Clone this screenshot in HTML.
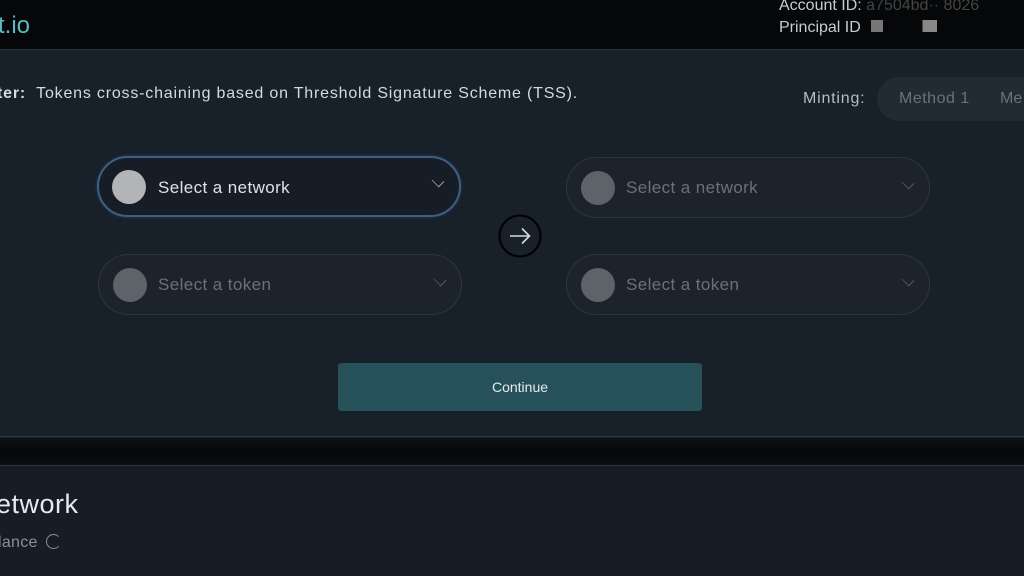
<!DOCTYPE html>
<html><head><style>
*{margin:0;padding:0;box-sizing:border-box}
body{width:1024px;height:576px;overflow:hidden;background:#161d26;font-family:"Liberation Sans",sans-serif;position:relative}
.hdr{position:absolute;left:0;top:0;width:1024px;height:50px;background:#050709;border-bottom:1px solid #1e3a3a}
.logo{position:absolute;left:-2px;top:12px;font-size:24px;color:#5cb8c4}
.acc{position:absolute;left:779px;top:-5px;color:#c8ccd2;font-size:16px;line-height:22px}
.panel{position:absolute;left:0;top:51px;width:1024px;height:386px;background:#18202a;border-bottom:1px solid #2a3a42}
.band{position:absolute;left:0;top:438px;width:1024px;height:28px;background:linear-gradient(#0c1216,#050709 50%,#0a0f13);border-bottom:1px solid #2a3a42}
.t{position:absolute;font-size:16px;color:#d6d9de;white-space:nowrap}
.sel{position:absolute;width:364px;height:61px;border-radius:31px;border:1px solid #2c3640;background:#1c232c}
.sel .c{position:absolute;left:14px;top:13px;width:34px;height:34px;border-radius:50%;background:#5e6269}
.sel .l{position:absolute;left:59px;top:20px;font-size:17px;color:#6c7178;letter-spacing:.4px}
.sel .v{position:absolute;right:16px;top:20px;width:10px;height:10px;border-right:1px solid #555b62;border-bottom:1px solid #555b62;transform:rotate(45deg) scaleY(.8)}
.act{border:2px solid #3e5f80;background:#161d26;box-shadow:0 0 3px #27405a}
.act .c{background:#b3b4b8;left:13px;top:12px}
.act .l{color:#dfe2e6;left:59px;top:20px}
.act .v{border-color:#9aa0a8;top:18px}
</style></head><body>
<div class="hdr"><div class="logo">t.io</div>
<div class="acc">Account ID: <span style="color:#444">a7504bd·· 8026</span><br>Principal ID <span style="display:inline-block;width:120px;height:12px;background:linear-gradient(90deg,#050709 5%,#777 5%,#777 15%,#050709 15%,#050709 48%,#888 48%,#888 60%,#050709 60%)"></span></div></div>
<div class="panel">
<div class="t" style="left:-3px;top:34px;letter-spacing:.8px"><b>ter:</b>&nbsp; Tokens cross-chaining based on Threshold Signature Scheme (TSS).</div>
<div class="t" style="left:803px;top:39px;color:#b8bcc2;letter-spacing:.8px">Minting:</div>
<div style="position:absolute;left:877px;top:26px;width:200px;height:44px;border-radius:22px;background:#222a34"></div>
<div class="t" style="left:899px;top:39px;color:#6c727a;letter-spacing:.5px">Method 1</div>
<div class="t" style="left:1000px;top:39px;color:#6c727a">Me</div>
<div class="sel act" style="left:97px;top:105px"><div class="c"></div><div class="l">Select a network</div><div class="v"></div></div>
<div class="sel" style="left:98px;top:203px"><div class="c"></div><div class="l">Select a token</div><div class="v"></div></div>
<div class="sel" style="left:566px;top:106px"><div class="c"></div><div class="l">Select a network</div><div class="v"></div></div>
<div class="sel" style="left:566px;top:203px"><div class="c"></div><div class="l">Select a token</div><div class="v"></div></div>
<svg style="position:absolute;left:498px;top:163px" width="44" height="44" viewBox="0 0 44 44"><circle cx="22" cy="22" r="20.5" fill="none" stroke="#000" stroke-width="2"/><path d="M12 22H31M24 14.5L31.5 22L24 29.5" fill="none" stroke="#d8dbe0" stroke-width="1.6"/></svg>
<div style="position:absolute;left:338px;top:312px;width:364px;height:48px;border-radius:3px;background:#26505a;color:#e6ecee;font-size:14px;text-align:center;line-height:48px">Continue</div>
</div>
<div class="band"></div>
<div class="t" style="left:-4px;top:489px;font-size:27px;color:#e6e9ee;letter-spacing:.5px">etwork</div>
<div class="t" style="left:-2px;top:534px;color:#8a9098;letter-spacing:.3px">lance <span style="display:inline-block;width:15px;height:15px;border:1.5px solid #8a9098;border-radius:50%;border-right-color:transparent;vertical-align:-2px;margin-left:3px"></span></div>
</body></html>
